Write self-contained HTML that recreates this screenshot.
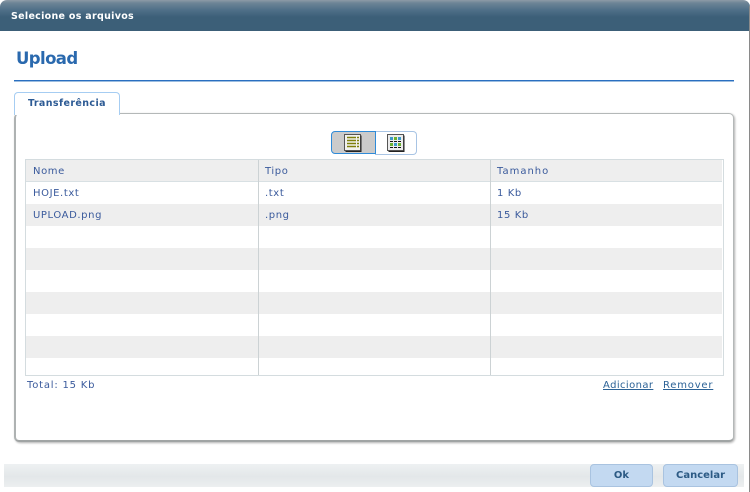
<!DOCTYPE html>
<html><head><meta charset="utf-8"><style>
html,body{margin:0;padding:0;background:#fff}
body{width:750px;height:492px;position:relative;overflow:hidden;font-family:"DejaVu Sans","Liberation Sans",sans-serif;font-size:10px;letter-spacing:.6px;color:#3a5a9c}
div,span,a{position:absolute;white-space:nowrap}
.row{left:26px;width:696px;height:22px}
.g{background:#eeeeee}
.vl{width:1px;background:#ccd2d4;top:160px;height:215px}
.t{line-height:12px}
.btn{top:464px;height:21px;background:#c3d9f1;border:1px solid #a9c3e0;border-radius:4px;font-weight:bold;color:#2c5a84;text-align:center;line-height:21px;font-size:10px;letter-spacing:0}
</style></head><body>
<div style="left:0;top:0;width:750px;height:31px;border-radius:7px 7px 0 0;background:linear-gradient(#8d9ba7 0,#6d8496 3px,#4f6f88 10px,#3c5f78 17px,#3c5f78 31px)"></div>
<div class="t" style="left:11px;top:11px;color:#fff;font-weight:bold;font-size:9.5px;letter-spacing:.3px">Selecione os arquivos</div>
<div style="left:749px;top:6px;width:1px;height:486px;background:#8a8a8a"></div>
<div style="left:16px;top:48px;font-size:16.5px;letter-spacing:-.6px;font-weight:bold;color:#2a69ae;line-height:22px">Upload</div>
<div style="left:14px;top:80px;width:720px;height:1px;background:#2a6fc0"></div>
<div style="left:14px;top:81px;width:720px;height:1px;background:#9cbde0"></div>

<div style="left:14px;top:113px;height:326px;border:1px solid #b4b8b8;border-left:2px solid #aeb2b2;border-bottom:2px solid #a0a4a4;border-radius:5px;box-shadow:1px 1px 2px #b0b0b0;background:#fff;box-sizing:content-box;width:717px"></div>
<div style="left:14px;top:92px;width:104px;height:22px;background:#fff;border:1px solid #a6cdf2;border-bottom:none;border-radius:4px 4px 0 0"></div>
<div class="t" style="left:28px;top:98px;font-weight:bold;color:#2c5a94;font-size:9.5px;letter-spacing:.4px">Transferência</div>

<!-- toggle -->
<div style="left:375px;top:131px;width:41px;height:22px;background:#fff;border:1px solid #a8c4e4;border-left:none;border-radius:0 4px 4px 0"></div>
<div style="left:331px;top:131px;width:43px;height:21px;background:#cbcbcb;border:1px solid #2f8bd8;border-radius:4px 0 0 4px"></div>
<svg style="position:absolute;left:344px;top:134px" width="18" height="18" viewBox="0 0 18 18">
<rect x="0.5" y="0.5" width="16" height="16" fill="#f2f2ee" stroke="#555"/><path d="M17 1.5V17.5H1.5" fill="none" stroke="#222"/>
<path d="M3 3.5H12M13 3.5H15M3 6.5H12M13 6.5H15M3 9.5H12M13 9.5H15M3 12.5H12M13 12.5H15" stroke="#7f800c" stroke-width="1.5"/>
</svg>
<svg style="position:absolute;left:387px;top:134px" width="18" height="18" viewBox="0 0 18 18">
<rect x="0.5" y="0.5" width="16" height="16" fill="#ececec" stroke="#555"/><path d="M17 1.5V17.5H1.5" fill="none" stroke="#222"/>
<rect x="3" y="3" width="3" height="3" fill="#3a9ac8"/><rect x="7" y="3" width="3" height="3" fill="#6ab030"/><rect x="11" y="3" width="3" height="3" fill="#3a9ac8"/>
<rect x="3" y="9" width="3" height="3" fill="#6ab030"/><rect x="7" y="9" width="3" height="3" fill="#3a9ac8"/><rect x="11" y="9" width="3" height="3" fill="#6ab030"/>
<path d="M3 7.5H14M3 13.5H14" stroke="#111" stroke-width="1" stroke-dasharray="3 1"/>
</svg>

<!-- table -->
<div style="left:25px;top:159px;width:697px;height:215px;border:1px solid #d4dcdf"></div>
<div style="left:26px;top:160px;width:696px;height:21px;background:#eeeeee"></div>
<div style="left:26px;top:181px;width:696px;height:1px;background:#d8e0e3"></div>
<div class="row g" style="top:204px"></div>
<div class="row g" style="top:248px"></div>
<div class="row g" style="top:292px"></div>
<div class="row g" style="top:336px"></div>
<div class="vl" style="left:258px"></div>
<div class="vl" style="left:490px"></div>
<div class="t" style="left:33px;top:166px">Nome</div><div class="t" style="left:265px;top:166px">Tipo</div><div class="t" style="left:497px;top:166px;letter-spacing:1px">Tamanho</div>
<div class="t" style="left:33px;top:188px">HOJE.txt</div><div class="t" style="left:265px;top:188px">.txt</div><div class="t" style="left:497px;top:188px">1 Kb</div>
<div class="t" style="left:33px;top:210px">UPLOAD.png</div><div class="t" style="left:265px;top:210px">.png</div><div class="t" style="left:497px;top:210px">15 Kb</div>
<div class="t" style="left:27px;top:380px;letter-spacing:.8px">Total: 15 Kb</div>
<div class="t" style="left:603px;top:380px;color:#2c6296;text-decoration:underline;letter-spacing:.4px">Adicionar</div>
<div class="t" style="left:663px;top:380px;color:#2c6296;text-decoration:underline;letter-spacing:.8px">Remover</div>

<!-- footer -->
<div style="left:4px;top:464px;width:740px;height:23px;background:linear-gradient(#eef1f2,#e3e7e9 55%,#eceff0)"></div>
<div class="btn" style="left:590px;width:61px">Ok</div>
<div class="btn" style="left:663px;width:73px">Cancelar</div>
</body></html>
